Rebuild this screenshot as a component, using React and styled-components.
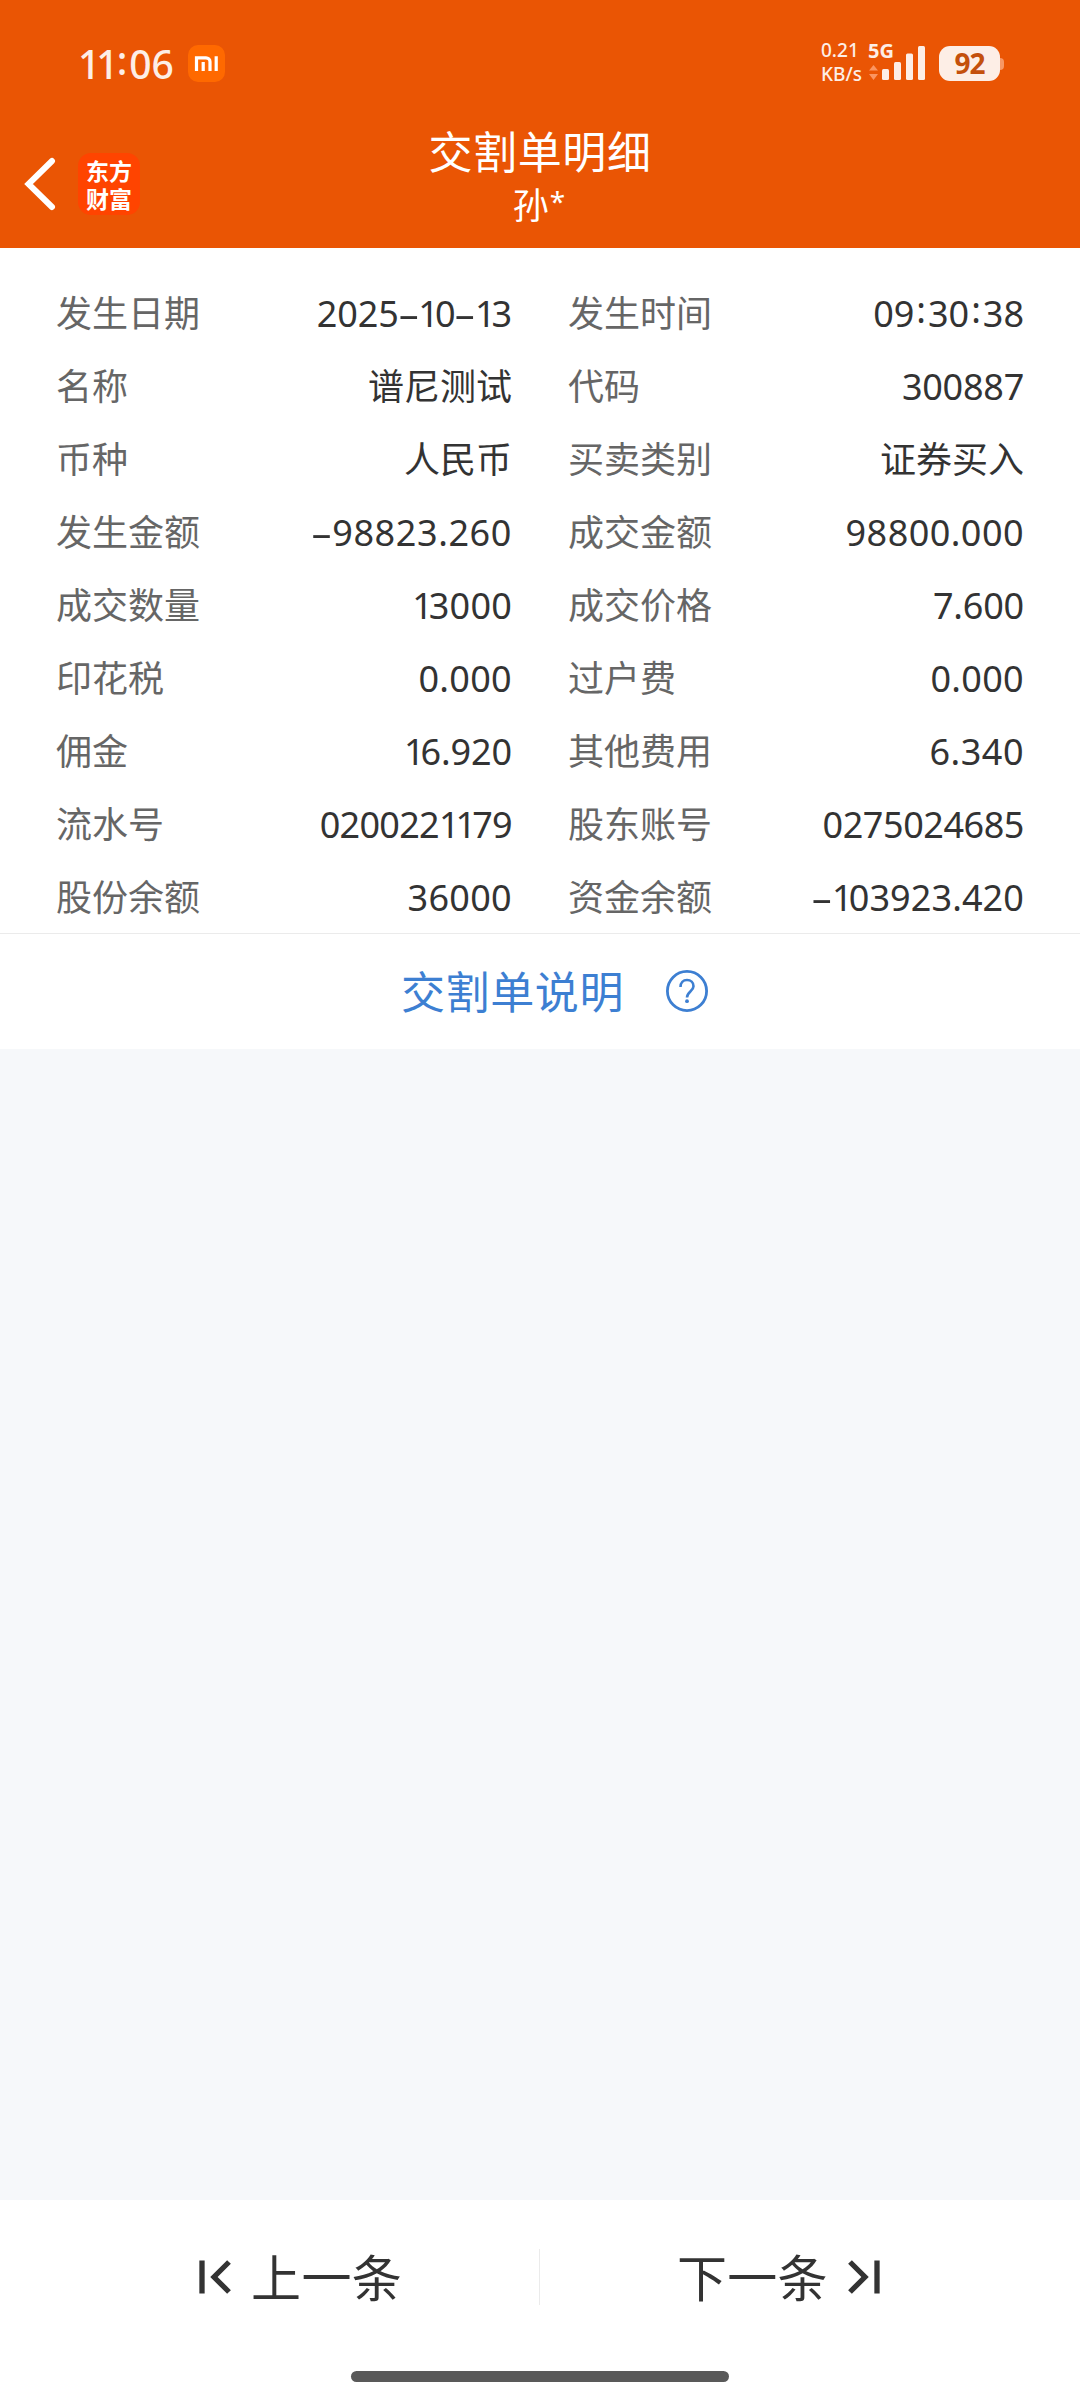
import styled, { createGlobalStyle } from 'styled-components';

const GlobalStyle = createGlobalStyle`
  * {
    box-sizing: border-box;
  }
  body {
    margin: 0;
    background: #f6f8fa;
    font-family: 'Noto Sans', 'Noto Sans CJK SC', sans-serif;
  }
`;

const Page = styled.div`
  display: flex;
  flex-direction: column;
  width: 1080px;
  height: 2400px;
`;

const Header = styled.header`
  height: 248px;
  background: #ea5504;
  color: #fff;
`;

const StatusBar = styled.div`
  display: flex;
  align-items: center;
  height: 127px;
  padding: 0 76px 0 78px;
  color: #fdeee6;
`;

const Clock = styled.span`
  width: 110px;
  font-size: 39px;
  font-weight: 500;
  line-height: 48px;
  white-space: nowrap;
`;

const StatusRight = styled.div`
  display: flex;
  align-items: center;
  margin-left: auto;
`;

const Speed = styled.div`
  width: 47px;
  padding-bottom: 3px;
  font-size: 19px;
  font-weight: 500;
  line-height: 24px;
  white-space: nowrap;
`;

const Network = styled.div`
  display: flex;
  flex-direction: column;
  width: 58px;
  height: 48px;
  margin-right: 13px;
`;

const NetworkType = styled.span`
  height: 0;
  font-size: 20px;
  font-weight: 700;
  line-height: 21px;
`;

const Battery = styled.div`
  width: 61px;
  height: 35px;
  border-radius: 11px;
  background: #fdeee6;
  color: #c4500c;
  font-size: 28px;
  font-weight: 700;
  line-height: 34px;
  letter-spacing: -1px;
  text-align: center;
`;

const BatteryTip = styled.div`
  width: 4px;
  height: 12px;
  border-radius: 0 4px 4px 0;
  background: #f79765;
`;

const TitleBar = styled.div`
  display: grid;
  grid-template-columns: 1fr auto 1fr;
  height: 121px;
`;

const TitleLeft = styled.div`
  display: flex;
  align-items: center;
  gap: 22px;
  padding-left: 24px;
  height: 114px;
`;

const AppLogo = styled.div`
  width: 62px;
  height: 62px;
  padding-top: 3px;
  border-radius: 13px;
  background: #ff4400;
  font-family: 'Noto Sans CJK SC', sans-serif;
  font-size: 23px;
  font-weight: 700;
  line-height: 28px;
  text-align: center;
`;

const TitleText = styled.div`
  text-align: center;
`;

const Title = styled.h1`
  margin: 0;
  font-size: 44px;
  font-weight: 400;
  line-height: 50px;
  letter-spacing: 0.6px;
`;

const Account = styled.div`
  padding-right: 2px;
  font-size: 36px;
  line-height: 58px;
`;

const Star = styled.span`
  margin-left: 1px;
  font-size: 28px;
  line-height: 1;
  vertical-align: 7px;
`;

const Details = styled.dl`
  display: grid;
  grid-template-columns: 1fr 1fr;
  grid-auto-rows: 73px;
  column-gap: 56px;
  height: 686px;
  margin: 0;
  padding: 29px 56px 0;
  border-bottom: 1px solid #ebebeb;
  background: #fff;
`;

const Item = styled.div`
  display: flex;
  justify-content: space-between;
  height: 73px;
  font-size: 36px;
  line-height: 73px;
`;

const Label = styled.dt`
  color: #666;
`;

const Value = styled.dd`
  margin: 0;
  color: #333;
  letter-spacing: ${({ $tracking }) => $tracking || 0}px;
  white-space: nowrap;
`;

const One = styled.span`
  letter-spacing: -4px;
`;

const Colon = styled.span`
  margin: 0 2px;
  vertical-align: 4px;
  line-height: 1;
`;

const Dash = styled.span`
  display: inline-block;
  margin: 0 4px;
  line-height: 1;
  transform: scaleX(1.9);
`;

const Explain = styled.a`
  display: flex;
  align-items: center;
  gap: 42px;
  height: 115px;
  padding-left: 401px;
  background: #fff;
  color: #3d7fd2;
  font-size: 44px;
  line-height: 60px;
  letter-spacing: 0.6px;

  svg {
    margin-bottom: 2px;
  }
`;

const Footer = styled.footer`
  height: 200px;
  margin-top: auto;
  background: #fff;
`;

const Pager = styled.nav`
  display: flex;
  align-items: center;
  height: 154px;
`;

const PagerButton = styled.button`
  display: flex;
  align-items: center;
  justify-content: ${({ $next }) => ($next ? 'flex-start' : 'flex-end')};
  gap: 20px;
  width: 539px;
  border: 0;
  padding: 0 137px;
  background: none;
  color: #333;
  font-family: inherit;
  font-size: 50px;
  line-height: 60px;
`;

const PagerText = styled.span`
  padding-top: 2px;
  letter-spacing: 0.3px;
`;

const Divider = styled.div`
  width: 1px;
  height: 56px;
  background: #ebebeb;
`;

const HomeIndicator = styled.div`
  width: 378px;
  height: 11px;
  margin: 17px auto 0;
  border-radius: 6px;
  background: #595959;
`;

const items = [
  { label: '发生日期', value: '2025-10-13', tracking: -0.1 },
  { label: '发生时间', value: '09:30:38' },
  { label: '名称', value: '谱尼测试' },
  { label: '代码', value: '300887', tracking: -0.25 },
  { label: '币种', value: '人民币' },
  { label: '买卖类别', value: '证券买入' },
  { label: '发生金额', value: '-98823.260', tracking: 0.6 },
  { label: '成交金额', value: '98800.000', tracking: 0.45 },
  { label: '成交数量', value: '13000', tracking: 0.2 },
  { label: '成交价格', value: '7.600', tracking: -0.2 },
  { label: '印花税', value: '0.000', tracking: 0.3 },
  { label: '过户费', value: '0.000', tracking: 0.3 },
  { label: '佣金', value: '16.920', tracking: -0.1 },
  { label: '其他费用', value: '6.340', tracking: 0.5 },
  { label: '流水号', value: '0200221179', tracking: -0.7 },
  { label: '股东账号', value: '0275024685', tracking: -0.45 },
  { label: '股份余额', value: '36000', tracking: 0.3 },
  { label: '资金余额', value: '-103923.420', tracking: 0.1 },
];

// Narrow ones, raised colons and wide dashes
const glyphs = { 1: One, ':': Colon, '-': Dash };

function Digits({ text }) {
  return text.split(/([1:-])/).map((part, index) => {
    const Glyph = glyphs[part];
    return Glyph ? <Glyph key={index}>{part}</Glyph> : part;
  });
}

function MiIcon() {
  return (
    <svg width="37" height="37" viewBox="0 0 37 37">
      <rect width="37" height="37" rx="10" fill="#ff6900" />
      <path
        d="M8.5 26V12.8H18a4 4 0 0 1 4 4V26M15.2 17V26M28.2 11.3V26"
        fill="none"
        stroke="#fff"
        strokeWidth="3.2"
      />
    </svg>
  );
}

function SignalIcon() {
  return (
    <svg width="58" height="48" viewBox="0 0 58 48">
      <path d="M1 30.5 5.5 25 10 30.5ZM1 34H10L5.5 40Z" fill="#fb9560" />
      <g fill="#fdeee6">
        <rect x="14" y="29" width="7" height="11" rx="1.5" />
        <rect x="26" y="22" width="7" height="18" rx="1.5" />
        <rect x="38" y="13.5" width="7" height="26.5" rx="1.5" />
        <rect x="50" y="6" width="7" height="34" rx="1.5" />
      </g>
    </svg>
  );
}

function BackIcon() {
  return (
    <svg width="32" height="54" viewBox="0 0 32 54">
      <path
        d="M28 4 4.5 27 28 50"
        fill="none"
        stroke="#fff"
        strokeWidth="6"
        strokeLinecap="round"
      />
    </svg>
  );
}

function HelpIcon() {
  return (
    <svg width="42" height="42" viewBox="0 0 42 42" fill="none">
      <circle cx="21" cy="21" r="19.6" stroke="#3d7fd2" strokeWidth="2.8" />
      <path
        d="M14.5 17C14.5 12.5 17.3 10 21 10s6.5 2.6 6.5 6.2c0 5-6.5 5.8-6.5 11.3"
        stroke="#3d7fd2"
        strokeWidth="2.6"
      />
      <circle cx="21" cy="31.2" r="1.9" fill="#3d7fd2" />
    </svg>
  );
}

function EdgeIcon({ next }) {
  return (
    <svg width="32" height="36" viewBox="0 0 32 36">
      <path
        d={next ? 'M2 3 17 18 2 33M29 1.5V34.5' : 'M3 1.5V34.5M30 3 15 18 30 33'}
        fill="none"
        stroke="#333"
        strokeWidth="5.3"
      />
    </svg>
  );
}

function App() {
  return (
    <Page>
      <GlobalStyle />
      <Header>
        <StatusBar>
          <Clock>
            <Digits text="11:06" />
          </Clock>
          <MiIcon />
          <StatusRight>
            <Speed>
              0.21
              <br />
              KB/s
            </Speed>
            <Network>
              <NetworkType>5G</NetworkType>
              <SignalIcon />
            </Network>
            <Battery>92</Battery>
            <BatteryTip />
          </StatusRight>
        </StatusBar>
        <TitleBar>
          <TitleLeft>
            <BackIcon />
            <AppLogo>
              东方
              <br />
              财富
            </AppLogo>
          </TitleLeft>
          <TitleText>
            <Title>交割单明细</Title>
            <Account>
              孙<Star>*</Star>
            </Account>
          </TitleText>
        </TitleBar>
      </Header>
      <Details>
        {items.map(({ label, value, tracking }) => (
          <Item key={label}>
            <Label>{label}</Label>
            <Value $tracking={tracking}>
              <Digits text={value} />
            </Value>
          </Item>
        ))}
      </Details>
      <Explain>
        交割单说明
        <HelpIcon />
      </Explain>
      <Footer>
        <Pager>
          <PagerButton>
            <EdgeIcon />
            <PagerText>上一条</PagerText>
          </PagerButton>
          <Divider />
          <PagerButton $next>
            <PagerText>下一条</PagerText>
            <EdgeIcon next />
          </PagerButton>
        </Pager>
        <HomeIndicator />
      </Footer>
    </Page>
  );
}

export default App;
